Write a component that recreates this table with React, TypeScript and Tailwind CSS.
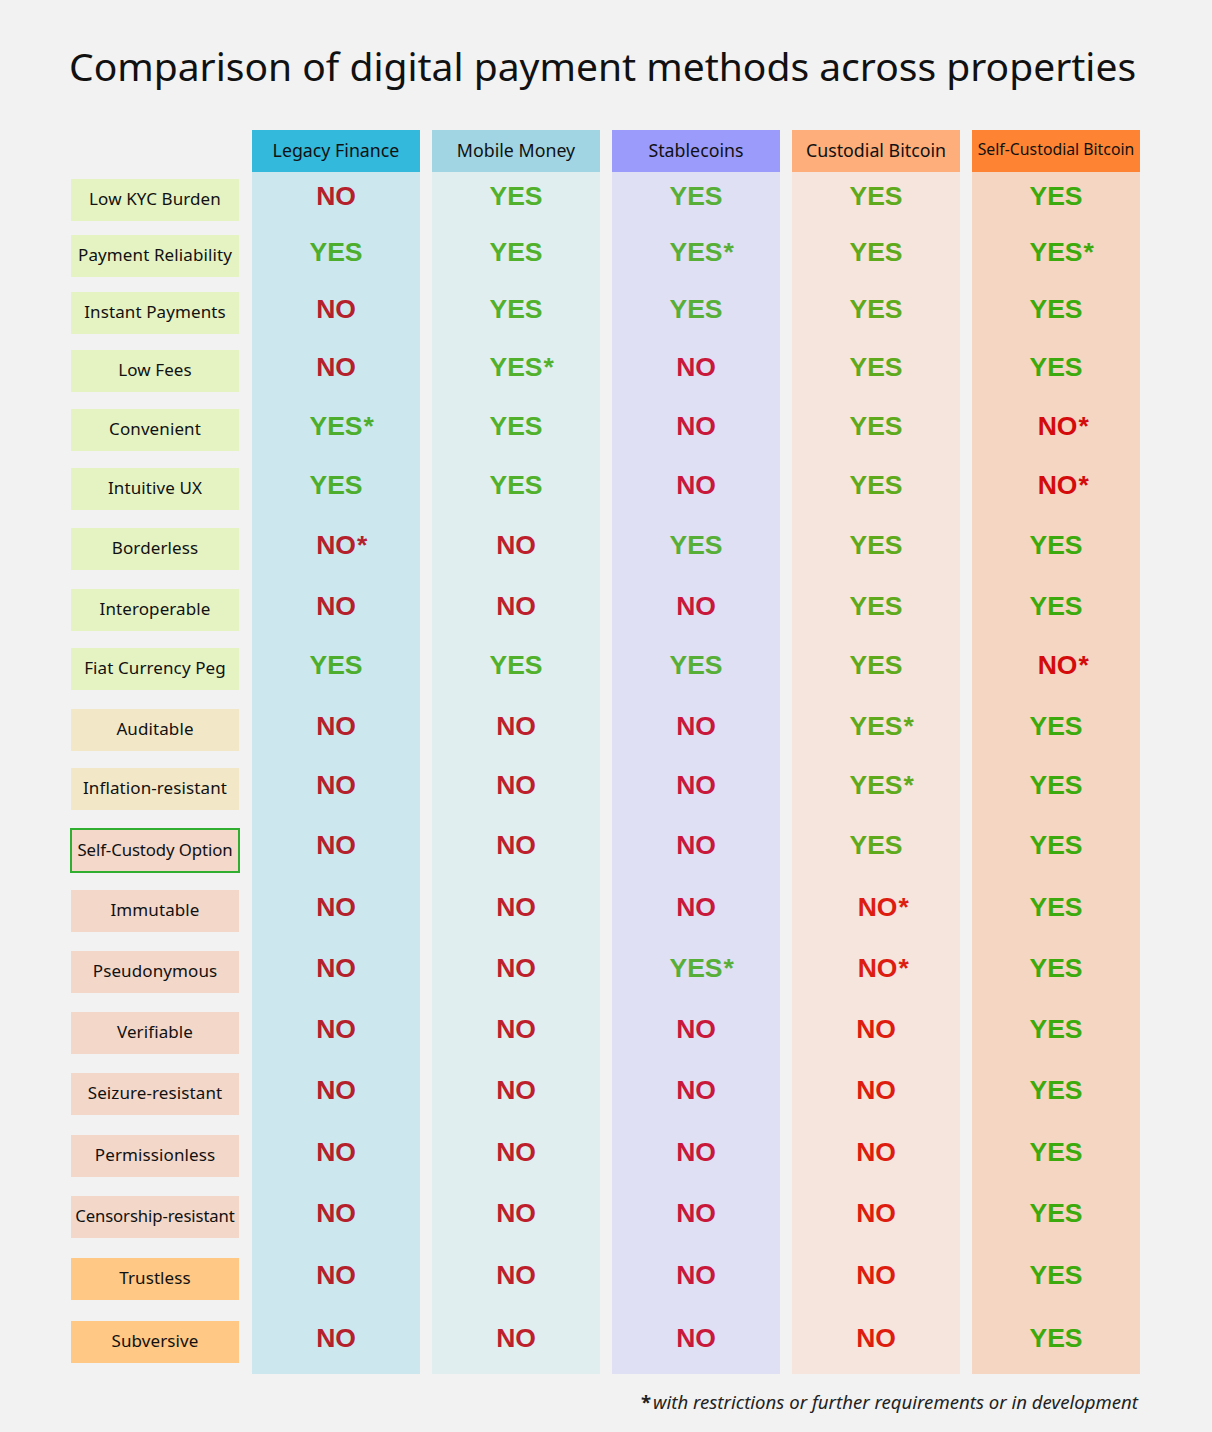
import React from "react";

type Col = {
  name: string;
  head: string;
  body: string;
  headText: string;
  yes: string;
  no: string;
  vals: string[];
};

const rows = [
  { label: "Low KYC Burden", bg: "bg-[#e5f3c3]", h: "h-[56px]" },
  { label: "Payment Reliability", bg: "bg-[#e5f3c3]", h: "h-[57px]" },
  { label: "Instant Payments", bg: "bg-[#e5f3c3]", h: "h-[58px]" },
  { label: "Low Fees", bg: "bg-[#e5f3c3]", h: "h-[59px]" },
  { label: "Convenient", bg: "bg-[#e5f3c3]", h: "h-[59px]" },
  { label: "Intuitive UX", bg: "bg-[#e5f3c3]", h: "h-[60px]" },
  { label: "Borderless", bg: "bg-[#e5f3c3]", h: "h-[61px]" },
  { label: "Interoperable", bg: "bg-[#e5f3c3]", h: "h-[59px]" },
  { label: "Fiat Currency Peg", bg: "bg-[#e5f3c3]", h: "h-[61px]" },
  { label: "Auditable", bg: "bg-[#f2e8c8]", h: "h-[59px]" },
  { label: "Inflation-resistant", bg: "bg-[#f2e8c8]", h: "h-[60px]" },
  { label: "Self-Custody Option", bg: "bg-[#f4d8ca]", h: "h-[62px]", special: true },
  { label: "Immutable", bg: "bg-[#f3d8ca]", h: "h-[61px]" },
  { label: "Pseudonymous", bg: "bg-[#f3d8ca]", h: "h-[61px]" },
  { label: "Verifiable", bg: "bg-[#f3d8ca]", h: "h-[61px]" },
  { label: "Seizure-resistant", bg: "bg-[#f3d8ca]", h: "h-[62px]" },
  { label: "Permissionless", bg: "bg-[#f3d8ca]", h: "h-[61px]" },
  { label: "Censorship-resistant", bg: "bg-[#f3d8ca]", h: "h-[62px]", small: true },
  { label: "Trustless", bg: "bg-[#ffc884]", h: "h-[63px]" },
  { label: "Subversive", bg: "bg-[#ffc884]", h: "h-[60px]" },
];

const cols: Col[] = [
  {
    name: "Legacy Finance",
    head: "bg-[#33b9dc]",
    body: "bg-[#cde7ee]",
    headText: "text-[17.8px]",
    yes: "text-[#4cae2c]",
    no: "text-[#b4202b]",
    vals: ["NO", "YES", "NO", "NO", "YES*", "YES", "NO*", "NO", "YES", "NO", "NO", "NO", "NO", "NO", "NO", "NO", "NO", "NO", "NO", "NO"],
  },
  {
    name: "Mobile Money",
    head: "bg-[#a1d5e3]",
    body: "bg-[#e0eef0]",
    headText: "text-[17.8px]",
    yes: "text-[#52b12c]",
    no: "text-[#bd1f2d]",
    vals: ["YES", "YES", "YES", "YES*", "YES", "YES", "NO", "NO", "YES", "NO", "NO", "NO", "NO", "NO", "NO", "NO", "NO", "NO", "NO", "NO"],
  },
  {
    name: "Stablecoins",
    head: "bg-[#9b9bfb]",
    body: "bg-[#dfe0f4]",
    headText: "text-[17.8px]",
    yes: "text-[#58af38]",
    no: "text-[#c8183b]",
    vals: ["YES", "YES*", "YES", "NO", "NO", "NO", "YES", "NO", "YES", "NO", "NO", "NO", "NO", "YES*", "NO", "NO", "NO", "NO", "NO", "NO"],
  },
  {
    name: "Custodial Bitcoin",
    head: "bg-[#fdae7a]",
    body: "bg-[#f6e5dc]",
    headText: "text-[17.8px]",
    yes: "text-[#5faa1c]",
    no: "text-[#dd1d10]",
    vals: ["YES", "YES", "YES", "YES", "YES", "YES", "YES", "YES", "YES", "YES*", "YES*", "YES", "NO*", "NO*", "NO", "NO", "NO", "NO", "NO", "NO"],
  },
  {
    name: "Self-Custodial Bitcoin",
    head: "bg-[#fe8433]",
    body: "bg-[#f5d6c2]",
    headText: "text-[15.8px]",
    yes: "text-[#3caa0c]",
    no: "text-[#d40b0b]",
    vals: ["YES", "YES*", "YES", "YES", "NO*", "NO*", "YES", "YES", "NO*", "YES", "YES", "YES", "YES", "YES", "YES", "YES", "YES", "YES", "YES", "YES"],
  },
];

function Cell({ v, col }: { v: string; col: Col }) {
  const star = v.endsWith("*");
  const word = star ? v.slice(0, -1) : v;
  const color = word === "YES" ? col.yes : col.no;
  const offset = word === "NO" && star && col.name !== "Legacy Finance" ? "ml-[3px]" : "";
  return (
    <div className="h-[42px] mt-[3px] flex items-center justify-center">
      <span
        className={`relative font-bold text-[26.5px] leading-none ${color} ${offset}`}
        style={{ fontFamily: '"Liberation Sans", Arial, sans-serif' }}
      >
        {word}
        {star && <span className="absolute left-full top-0 ml-[1px]">*</span>}
      </span>
    </div>
  );
}

export default function App() {
  const ub = { fontFamily: '"Noto Sans", "Open Sans", sans-serif' };
  return (
    <div className="w-[1212px] h-[1432px] bg-[#f2f2f2] text-[#111]" style={ub}>
      <div className="pt-[40px] pl-[69px] h-[130px]">
        <h1 className="text-[39px] leading-[52px] text-[#111] font-normal whitespace-nowrap">
          Comparison of digital payment methods across properties
        </h1>
      </div>
      <div className="flex pl-[71px]">
        <div className="w-[168px] flex flex-col">
          <div className="h-[42px]" />
          {rows.map((r) => (
            <div key={r.label} className={r.h}>
              {r.special ? (
                <div
                  className={`mt-[7px] -ml-[1px] w-[170px] h-[45px] pb-[2px] border-2 border-[#2fae2f] ${r.bg} flex items-center justify-center text-[16.8px] tracking-[-0.1px] whitespace-nowrap`}
                >
                  {r.label}
                </div>
              ) : (
                <div
                  className={`mt-[7px] h-[42px] pb-[3px] ${r.bg} flex items-center justify-center whitespace-nowrap ${
                    r.small ? "text-[16.7px] tracking-[-0.1px]" : "text-[17px] tracking-[0.1px]"
                  }`}
                >
                  {r.label}
                </div>
              )}
            </div>
          ))}
        </div>
        <div className="flex gap-[12px] ml-[13px]">
          {cols.map((c) => (
            <div key={c.name} className={`w-[168px] ${c.body} flex flex-col`}>
              <div
                className={`h-[42px] pb-[2px] ${c.head} flex items-center justify-center whitespace-nowrap ${c.headText}`}
              >
                {c.name}
              </div>
              {rows.map((r, i) => (
                <div key={r.label} className={r.h}>
                  <Cell v={c.vals[i]} col={c} />
                </div>
              ))}
            </div>
          ))}
        </div>
      </div>
      <div className="flex justify-end pr-[74px] pt-[14px]">
        <span className="text-[18.6px] text-[#222] whitespace-nowrap">
          <span className="font-bold not-italic mr-[2px]">*</span>
          <span className="italic">with restrictions or further requirements or in development</span>
        </span>
      </div>
    </div>
  );
}
